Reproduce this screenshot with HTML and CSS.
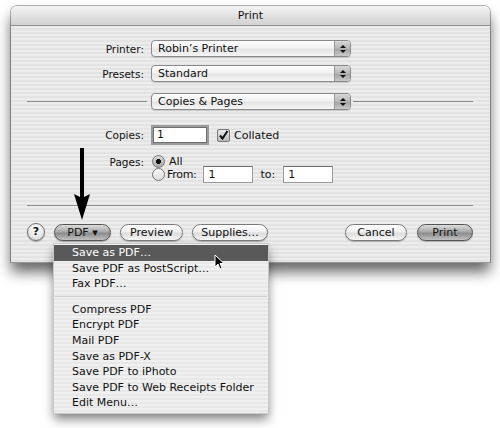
FILE: index.html
```html
<!DOCTYPE html>
<html>
<head>
<meta charset="utf-8">
<link rel="stylesheet" href="styles.css">
</head>
<body>
<div class="window">
  <div class="titlebar">Print</div>
  <div class="content">
    <div class="row">
      <span class="label">Printer:</span>
      <div class="popup"><span class="popup-text">Robin’s Printer</span><span class="stepper"><i class="up"></i><i class="down"></i></span></div>
    </div>
    <div class="row row-presets">
      <span class="label">Presets:</span>
      <div class="popup"><span class="popup-text">Standard</span><span class="stepper"><i class="up"></i><i class="down"></i></span></div>
    </div>
    <div class="row row-pane">
      <span class="line line-left"></span>
      <div class="popup"><span class="popup-text">Copies &amp; Pages</span><span class="stepper"><i class="up"></i><i class="down"></i></span></div>
      <span class="line line-right"></span>
    </div>
    <div class="row row-copies">
      <span class="label">Copies:</span>
      <div class="field field-copies focused">1</div>
      <span class="checkbox"><svg width="11" height="11" viewBox="0 0 11 11"><path d="M2 5.5 L4.5 8.5 L9.5 1" fill="none" stroke="#111" stroke-width="2"/></svg></span>
      <span class="ctl-text">Collated</span>
    </div>
    <div class="row row-all">
      <span class="label">Pages:</span>
      <span class="radio on"></span>
      <span class="ctl-text">All</span>
    </div>
    <div class="row row-from">
      <span class="label"></span>
      <span class="radio"></span>
      <span class="ctl-text from">From:</span>
      <div class="field field-range">1</div>
      <span class="ctl-text to">to:</span>
      <div class="field field-range field-to">1</div>
    </div>
    <div class="sep"></div>
    <div class="buttons">
      <span class="help">?</span>
      <span class="btn dark btn-pdf">PDF ▾</span>
      <span class="btn btn-preview">Preview</span>
      <span class="btn btn-supplies">Supplies…</span>
      <span class="spacer"></span>
      <span class="btn btn-cancel">Cancel</span>
      <span class="btn dark btn-print">Print</span>
    </div>
  </div>
</div>

<svg class="arrow" width="20" height="76" viewBox="0 0 20 76">
  <rect x="8" y="0" width="4" height="50" fill="#000"/>
  <polygon points="2,46 10,50 18,46 10,72" fill="#000"/>
</svg>

<div class="menu">
  <div class="item selected">Save as PDF…</div>
  <div class="item">Save PDF as PostScript…</div>
  <div class="item">Fax PDF…</div>
  <div class="menu-sep"></div>
  <div class="item">Compress PDF</div>
  <div class="item">Encrypt PDF</div>
  <div class="item">Mail PDF</div>
  <div class="item">Save as PDF-X</div>
  <div class="item">Save PDF to iPhoto</div>
  <div class="item">Save PDF to Web Receipts Folder</div>
  <div class="item">Edit Menu…</div>
</div>

<svg class="cursor" width="11" height="16" viewBox="0 0 11 16">
  <path d="M1 1 L1 13 L4 10 L6 15 L8 14 L6 9.5 L10 9.5 Z" fill="#000" stroke="#fff" stroke-width="1"/>
</svg>
</body>
</html>
```

FILE: styles.css
```css
html, body {
  margin: 0;
  padding: 0;
  background: #fff;
}
body {
  width: 500px;
  height: 428px;
  position: relative;
  overflow: hidden;
  font-family: "DejaVu Sans", "Liberation Sans", sans-serif;
  font-size: 10.5px;
  color: #111;
}
.window {
  margin: 6px 0 0 11px;
  width: 479px;
  height: 256px;
  border-radius: 6px 6px 0 0;
  background: repeating-linear-gradient(#ececec 0 2px, #e3e3e3 2px 4px);
  box-shadow: 0 1px 0 #999, 0 10px 14px rgba(0,0,0,0.6), 0 0 0 1px #b5b5b5;
  display: flex;
  flex-direction: column;
}
.titlebar {
  height: 19px;
  line-height: 19px;
  text-align: center;
  border-bottom: 1px solid #8e8e8e;
  border-radius: 6px 6px 0 0;
  background: linear-gradient(#f4f4f4, #e2e2e2 50%, #d2d2d2);
  font-size: 11px;
}
.content {
  padding: 14px 17px 0 16px;
  display: flex;
  flex-direction: column;
}
.row {
  display: flex;
  align-items: center;
}
.label {
  width: 117px;
  text-align: right;
  margin-right: 7px;
  flex: none;
}
.popup {
  width: 200px;
  height: 17px;
  box-sizing: border-box;
  border: 1px solid #8a8a8a;
  border-radius: 4px;
  background: linear-gradient(#fdfdfd, #f2f2f2 45%, #e4e4e4 55%, #f6f6f6);
  display: flex;
  align-items: center;
  flex: none;
  box-shadow: 0 1px 1px rgba(0,0,0,0.15);
}
.popup-text {
  flex: 1;
  padding-left: 6px;
  font-size: 11px;
}
.stepper {
  width: 15px;
  height: 15px;
  border-left: 1px solid #999;
  border-radius: 0 3px 3px 0;
  background: linear-gradient(#d8d8d8, #b5b5b5 50%, #a3a3a3 55%, #c9c9c9);
  display: flex;
  flex-direction: column;
  align-items: center;
  justify-content: center;
  gap: 2px;
}
.stepper i {
  width: 0;
  height: 0;
  border-left: 3px solid transparent;
  border-right: 3px solid transparent;
}
.stepper .up { border-bottom: 3px solid #111; }
.stepper .down { border-top: 3px solid #111; }
.row-presets { margin-top: 8px; }
.row-pane { margin-top: 11px; }
.line {
  flex: 1;
  height: 1px;
  background: #8a8a8a;
}
.line-left { margin-right: 4px; }
.line-right { margin-left: 2px; }
.row-copies { margin-top: 15px; }
.field {
  height: 17px;
  box-sizing: border-box;
  border: 1px solid #9a9a9a;
  border-top-color: #6e6e6e;
  background: #fff;
  line-height: 15px;
  padding-left: 4px;
  font-size: 11px;
  flex: none;
}
.field-copies {
  width: 58px;
  height: 20px;
  line-height: 16px;
}
.field-copies.focused {
  border: 2px solid #9b9b9b;
  box-shadow: inset 0 0 0 1px #6f6f6f;
}
.checkbox {
  width: 11px;
  height: 11px;
  margin-left: 8px;
  border: 1px solid #777;
  border-radius: 2px;
  background: linear-gradient(#e8e8e8, #bdbdbd);
  display: flex;
  flex: none;
}
.ctl-text {
  margin-left: 4px;
  font-size: 11px;
}
.row-all {
  margin-top: 10px;
  height: 13px;
}
.radio {
  width: 11px;
  height: 11px;
  border-radius: 50%;
  border: 1px solid #777;
  background: linear-gradient(#fafafa, #dcdcdc);
  flex: none;
  margin-left: 1px;
}
.radio.on {
  background: radial-gradient(circle, #111 0 2.3px, transparent 2.8px), linear-gradient(#dadada, #a8a8a8);
}
.row-from {
  margin-top: -2px;
}
.ctl-text.from { margin-left: 2px; letter-spacing: -0.3px; }
.field-range {
  width: 50px;
  margin-left: 7px;
}
.ctl-text.to { margin-left: 7px; }
.field-range.field-to { margin-left: 8px; }
.sep {
  margin-top: 22px;
  height: 1px;
  background: #8f8f8f;
}
.buttons {
  margin-top: 17px;
  display: flex;
  align-items: center;
  height: 18px;
}
.help {
  width: 16px;
  height: 16px;
  border-radius: 50%;
  border: 1px solid #707070;
  background: radial-gradient(circle at 50% 30%, #fff, #d4d4d4);
  text-align: center;
  line-height: 16px;
  font-weight: bold;
  font-size: 11px;
  flex: none;
  box-shadow: 0 1px 1px rgba(0,0,0,0.3);
}
.btn {
  height: 17px;
  box-sizing: border-box;
  border: 1px solid #7a7a7a;
  border-radius: 9px;
  background: linear-gradient(#ffffff, #f0f0f0 45%, #dcdcdc 55%, #f8f8f8);
  text-align: center;
  line-height: 15px;
  font-size: 11px;
  flex: none;
  box-shadow: 0 1px 1px rgba(0,0,0,0.25);
}
.btn.dark {
  background: linear-gradient(#dcdcdc, #a9a9a9 45%, #8b8b8b 55%, #c2c2c2);
  border-color: #555;
}
.btn-pdf { width: 57px; margin-left: 9px; }
.btn-preview { width: 63px; margin-left: 9px; }
.btn-supplies { width: 76px; margin-left: 9px; }
.spacer { flex: 1; }
.btn-cancel { width: 62px; }
.btn-print { width: 56px; margin-left: 10px; }

.arrow {
  position: absolute;
  left: 72px;
  top: 148px;
}
.menu {
  position: absolute;
  left: 54px;
  top: 244px;
  width: 214px;
  padding: 1px 0 2px;
  background: repeating-linear-gradient(#f0f0f0 0 2px, #e8e8e8 2px 4px);
  box-shadow: 0 0 0 1px #c8c8c8, 0 6px 10px rgba(0,0,0,0.5);
  font-size: 11px;
}
.item {
  height: 15.6px;
  line-height: 15.6px;
  padding-left: 18px;
  white-space: nowrap;
}
.item.selected {
  background: #595959;
  color: #fff;
}
.menu-sep {
  height: 10px;
  position: relative;
}
.menu-sep::after {
  content: "";
  position: absolute;
  left: 1px;
  right: 1px;
  top: 4px;
  height: 1px;
  background: #cfcfcf;
}
.cursor {
  position: absolute;
  left: 214px;
  top: 254px;
}
```
